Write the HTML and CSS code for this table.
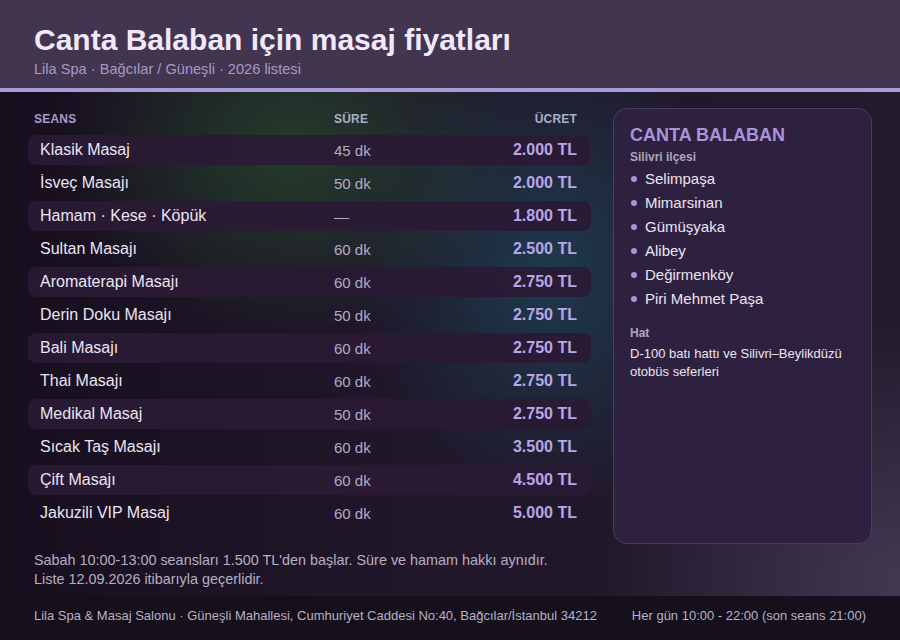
FILE: index.html
```html
<!DOCTYPE html>
<html lang="tr">
<head>
<meta charset="utf-8">
<title>Canta Balaban için masaj fiyatları</title>
<link rel="stylesheet" href="styles.css">
</head>
<body>
<div class="page">
  <header class="top">
    <h1 class="title">Canta Balaban için masaj fiyatları</h1>
    <div class="subtitle">Lila Spa · Bağcılar / Güneşli · 2026 listesi</div>
  </header>
  <main class="content">
    <section class="prices">
      <div class="thead">
        <span>SEANS</span><span>SÜRE</span><span class="r">ÜCRET</span>
      </div>
      <div class="row alt"><span class="name">Klasik Masaj</span><span class="dur">45 dk</span><span class="price">2.000 TL</span></div>
      <div class="row"><span class="name">İsveç Masajı</span><span class="dur">50 dk</span><span class="price">2.000 TL</span></div>
      <div class="row alt"><span class="name">Hamam · Kese · Köpük</span><span class="dur">—</span><span class="price">1.800 TL</span></div>
      <div class="row"><span class="name">Sultan Masajı</span><span class="dur">60 dk</span><span class="price">2.500 TL</span></div>
      <div class="row alt"><span class="name">Aromaterapi Masajı</span><span class="dur">60 dk</span><span class="price">2.750 TL</span></div>
      <div class="row"><span class="name">Derin Doku Masajı</span><span class="dur">50 dk</span><span class="price">2.750 TL</span></div>
      <div class="row alt"><span class="name">Bali Masajı</span><span class="dur">60 dk</span><span class="price">2.750 TL</span></div>
      <div class="row"><span class="name">Thai Masajı</span><span class="dur">60 dk</span><span class="price">2.750 TL</span></div>
      <div class="row alt"><span class="name">Medikal Masaj</span><span class="dur">50 dk</span><span class="price">2.750 TL</span></div>
      <div class="row"><span class="name">Sıcak Taş Masajı</span><span class="dur">60 dk</span><span class="price">3.500 TL</span></div>
      <div class="row alt"><span class="name">Çift Masajı</span><span class="dur">60 dk</span><span class="price">4.500 TL</span></div>
      <div class="row"><span class="name">Jakuzili VIP Masaj</span><span class="dur">60 dk</span><span class="price">5.000 TL</span></div>
    </section>
    <aside class="card">
      <h2 class="card-title">CANTA BALABAN</h2>
      <div class="label">Silivri ilçesi</div>
      <ul class="areas">
        <li>Selimpaşa</li>
        <li>Mimarsinan</li>
        <li>Gümüşyaka</li>
        <li>Alibey</li>
        <li>Değirmenköy</li>
        <li>Piri Mehmet Paşa</li>
      </ul>
      <div class="label hat">Hat</div>
      <p class="hat-text">D-100 batı hattı ve Silivri–Beylikdüzü otobüs seferleri</p>
    </aside>
    <div class="notes">
      <p>Sabah 10:00-13:00 seansları 1.500 TL'den başlar. Süre ve hamam hakkı aynıdır.</p>
      <p>Liste 12.09.2026 itibarıyla geçerlidir.</p>
    </div>
  </main>
  <footer class="foot">
    <span>Lila Spa &amp; Masaj Salonu · Güneşli Mahallesi, Cumhuriyet Caddesi No:40, Bağcılar/İstanbul 34212</span>
    <span>Her gün 10:00 - 22:00 (son seans 21:00)</span>
  </footer>
</div>
</body>
</html>
```
FILE: styles.css
```css
* { box-sizing: border-box; }
html, body { margin: 0; padding: 0; }
body {
  font-family: "Liberation Sans", Arial, sans-serif;
  color: #ece4f2;
  background: #1b1424;
}
.page {
  width: 900px;
  height: 640px;
  display: flex;
  flex-direction: column;
  background:
    radial-gradient(ellipse 230px 190px at 290px 150px, rgba(42, 98, 48, 0.5), rgba(42, 98, 48, 0) 100%),
    radial-gradient(ellipse 190px 240px at 550px 270px, rgba(28, 92, 112, 0.5), rgba(28, 92, 112, 0) 100%),
    radial-gradient(ellipse 300px 260px at 900px 580px, rgba(95, 88, 118, 0.5), rgba(95, 88, 118, 0) 100%),
    linear-gradient(90deg, #170f1e 0%, #1f1629 40%, #231a2d 100%);
}
.top {
  background: #41354f;
  border-bottom: 4px solid #a99bd6;
  height: 92px;
  padding: 23px 34px 0;
}
.title {
  margin: 0;
  font-size: 30px;
  line-height: 34px;
  font-weight: 700;
  color: #f1e8fb;
}
.subtitle {
  margin-top: 3px;
  font-size: 14.6px;
  line-height: 18px;
  color: #a69ac8;
}
.content {
  flex: 1;
  display: grid;
  grid-template-columns: 563px 259px;
  grid-template-rows: 436px auto;
  column-gap: 22px;
  padding: 16px 28px 0 28px;
}
.prices {
  display: flex;
  flex-direction: column;
  gap: 3px;
}
.thead {
  display: grid;
  grid-template-columns: 300px 1fr auto;
  padding: 4px 14px 0 6px;
  height: 21px;
  font-size: 12px;
  line-height: 14px;
  font-weight: 700;
  color: #a89bd0;
  letter-spacing: 0.2px;
  margin-bottom: 3px;
}
.thead span:nth-child(2) { color: #a8b0c8; }
.thead .r { text-align: right; color: #a8b0cc; }
.row {
  display: grid;
  grid-template-columns: 294px 1fr auto;
  align-items: center;
  height: 30px;
  padding: 0 14px 0 12px;
  border-radius: 8px;
}
.row.alt { background: rgba(42, 26, 52, 0.92); }
.name { font-size: 16px; color: #ece4f2; }
.dur { font-size: 15px; color: #b3abc0; }
.price { font-size: 16px; font-weight: 700; color: #b8a6e8; text-align: right; }
.card {
  background: #2e2140;
  border: 1px solid #4c3e5e;
  border-radius: 14px;
  padding: 15px 16px;
}
.card-title {
  margin: 0;
  font-size: 18px;
  line-height: 22px;
  font-weight: 700;
  color: #a994d8;
}
.label {
  margin-top: 4px;
  font-size: 12px;
  line-height: 15px;
  font-weight: 700;
  color: #b0a6bc;
}
.areas {
  list-style: none;
  margin: 1px 0 0;
  padding: 0;
}
.areas li {
  display: flex;
  align-items: center;
  gap: 8px;
  height: 24px;
  font-size: 15px;
  color: #ece4f2;
}
.areas li::before {
  content: "";
  width: 6px;
  height: 6px;
  border-radius: 50%;
  background: #a994d8;
  margin-left: 1px;
  margin-top: 2px;
}
.label.hat { margin-top: 16px; }
.hat-text {
  margin: 4px 0 0;
  font-size: 13px;
  line-height: 18px;
  color: #ece4f2;
}
.notes {
  grid-column: 1 / span 2;
  padding: 7px 6px 0;
}
.notes p {
  margin: 0;
  font-size: 14.4px;
  line-height: 19px;
  color: #b7aec2;
}
.foot {
  height: 44px;
  flex: none;
  background: #15101c;
  display: flex;
  justify-content: space-between;
  align-items: center;
  padding: 0 34px 5px;
  font-size: 13px;
  color: #b9b1c6;
}
```
